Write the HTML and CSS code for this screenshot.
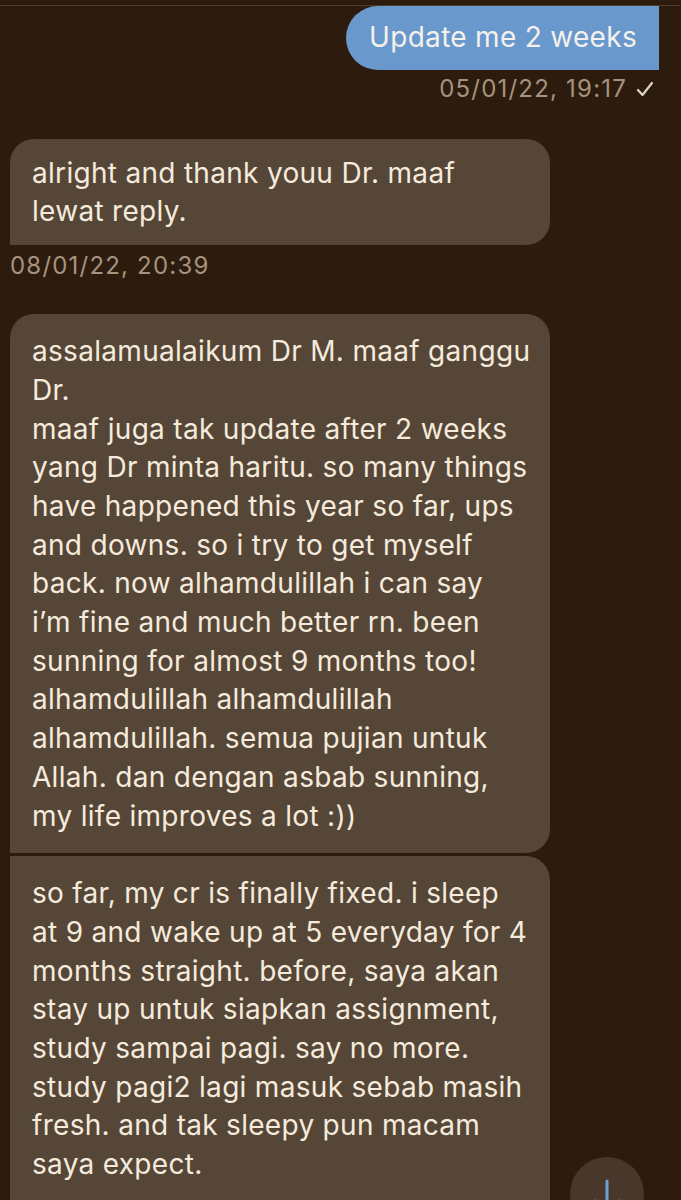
FILE: index.html
```html
<!DOCTYPE html>
<html>
<head>
<meta charset="utf-8">
<link rel="stylesheet" href="styles.css">
</head>
<body>
<div class="top-rule"></div>
<div class="chat">
  <div class="bubble out">Update me 2 weeks</div>
  <div class="meta out-meta">05/01/22, 19:17 <svg class="check" width="18" height="16" viewBox="0 0 18 16"><polyline points="2,9 6.5,14 16,2" fill="none" stroke="#ddd4c8" stroke-width="2.2" stroke-linecap="round" stroke-linejoin="round"/></svg></div>

  <div class="bubble in solo">alright and thank youu Dr. maaf<br>lewat reply.</div>
  <div class="meta in-meta">08/01/22, 20:39</div>

  <div class="bubble in first">assalamualaikum Dr M. maaf ganggu<br>Dr.<br>maaf juga tak update after 2 weeks<br>yang Dr minta haritu. so many things<br>have happened this year so far, ups<br>and downs. so i try to get myself<br>back. now alhamdulillah i can say<br>i’m fine and much better rn. been<br>sunning for almost 9 months too!<br>alhamdulillah alhamdulillah<br>alhamdulillah. semua pujian untuk<br>Allah. dan dengan asbab sunning,<br>my life improves a lot :))</div>
  <div class="bubble in next">so far, my cr is finally fixed. i sleep<br>at 9 and wake up at 5 everyday for 4<br>months straight. before, saya akan<br>stay up untuk siapkan assignment,<br>study sampai pagi. say no more.<br>study pagi2 lagi masuk sebab masih<br>fresh. and tak sleepy pun macam<br>saya expect.</div>
</div>
<div class="scroll-btn">
  <svg width="74" height="74" viewBox="0 0 74 74"><line x1="37" y1="24" x2="37" y2="56" stroke="#6fa0d6" stroke-width="3" stroke-linecap="round"/><polyline points="25,44 37,56 49,44" fill="none" stroke="#6fa0d6" stroke-width="3" stroke-linecap="round" stroke-linejoin="round"/></svg>
</div>
</body>
</html>
```
FILE: styles.css
```css
html, body {
  margin: 0;
  padding: 0;
}
body {
  background: #2d1c0e;
  font-family: Inter, "Open Sans", "Liberation Sans", sans-serif;
  color: #f5ebdd;
  height: 1200px;
  overflow: hidden;
  position: relative;
}
.top-rule {
  height: 1px;
  margin-top: 5px;
  background: #4e3d2d;
}
.chat {
  display: flex;
  flex-direction: column;
  padding: 0 22px 0 10px;
}
.bubble {
  font-size: 28px;
  letter-spacing: 0.3px;
  line-height: 38.7px;
  box-sizing: border-box;
  white-space: nowrap;
}
.out {
  align-self: flex-end;
  background: #6898cc;
  color: #f4f1ec;
  padding: 12px 22px 13px 23px;
  border-radius: 32px 0 0 32px;
}
.meta {
  font-size: 24px;
  letter-spacing: 1.2px;
  line-height: 30px;
  color: #a5937f;
}
.out-meta {
  align-self: flex-end;
  margin-top: 4px;
  margin-right: 5px;
  display: flex;
  align-items: center;
  gap: 9px;
}
.check {
  display: block;
}
.in {
  width: 540px;
  background: #564637;
  padding: 15px 20px 14px 22px;
}
.solo {
  margin-top: 35px;
  border-radius: 24px 24px 24px 0;
}
.in-meta {
  margin-top: 6px;
}
.first {
  margin-top: 33px;
  border-radius: 24px 24px 24px 0;
  padding-top: 18px;
  padding-bottom: 18px;
}
.next {
  margin-top: 3px;
  border-radius: 0 24px 24px 0;
  padding-top: 18px;
  padding-bottom: 60px;
}
.scroll-btn {
  position: absolute;
  left: 570px;
  top: 1157px;
  width: 74px;
  height: 74px;
  border-radius: 50%;
  background: #48372a;
}
.scroll-btn svg {
  display: block;
}
```
